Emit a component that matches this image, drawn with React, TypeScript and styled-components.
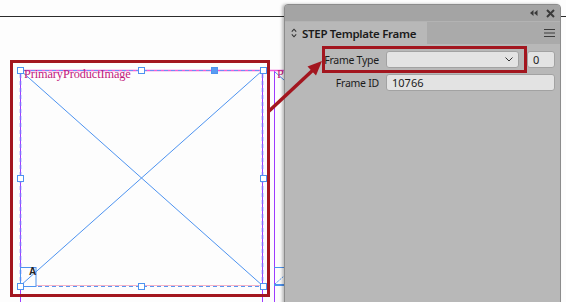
import React from 'react'
import styled, { createGlobalStyle } from 'styled-components'

const GlobalStyle = createGlobalStyle`
  html, body {
    margin: 0;
    padding: 0;
    background: #fdfdfd;
  }
  body {
    font-family: "Noto Sans", "Liberation Sans", sans-serif;
  }
  *, *::before, *::after {
    box-sizing: border-box;
  }
`

const Stage = styled.div`
  position: relative;
  width: 566px;
  height: 302px;
  overflow: hidden;
  background: #fdfdfd;
`

const TopRule = styled.div`
  position: absolute;
  left: 0;
  right: 0;
  top: 16px;
  height: 1px;
  background: #2b2b2b;
`

const Artwork = styled.svg`
  position: absolute;
  left: 0;
  top: 0;
`

const FrameLabel = styled.span<{ $x: number }>`
  position: absolute;
  top: 67px;
  left: ${p => p.$x}px;
  font-family: "Liberation Serif", "DejaVu Serif", serif;
  font-size: 12.3px;
  letter-spacing: -0.1px;
  color: #c2187c;
  white-space: nowrap;
`

const AnchorMark = styled.span`
  position: absolute;
  left: 29px;
  top: 266px;
  font-family: "Liberation Sans", Arial, sans-serif;
  font-size: 10px;
  font-weight: 700;
  color: #222;
`

const Handle = styled.div<{ $filled?: boolean }>`
  position: absolute;
  width: 7px;
  height: 7px;
  margin: -3.5px 0 0 -3.5px;
  border: 1px solid #4d93f0;
  background: ${p => (p.$filled ? '#5a9bf2' : '#fff')};
`

const Highlight = styled.div`
  position: absolute;
  border: 3px solid #a3161f;
  pointer-events: none;
`

const Panel = styled.section`
  position: absolute;
  left: 284px;
  top: 4px;
  width: 277px;
  height: 310px;
  display: flex;
  flex-direction: column;
  background: #b8b8b8;
  border: 1px solid #8c8c8c;
  border-radius: 4px 4px 0 0;
  box-shadow: -2px 0 3px rgba(0, 0, 0, 0.25);
  overflow: hidden;
  color: #1b1b1b;
`

const TitleBar = styled.div`
  height: 17px;
  display: flex;
  align-items: center;
  justify-content: flex-end;
  gap: 8px;
  padding-right: 5px;
  background: #a4a4a4;
  border-bottom: 1px solid #b3b3b3;
`

const TabStrip = styled.div`
  height: 22px;
  display: flex;
  align-items: stretch;
  background: #aaaaaa;
`

const Tab = styled.div`
  width: 142px;
  display: flex;
  align-items: center;
  gap: 5px;
  padding-left: 6px;
  background: #b8b8b8;
  font-size: 11.5px;
  font-weight: 600;
  letter-spacing: -0.3px;
  white-space: nowrap;
`

const MenuButton = styled.div`
  margin-left: auto;
  display: flex;
  align-items: center;
  padding-right: 5px;
`

const Body = styled.div`
  display: grid;
  grid-template-columns: 94px 1fr;
  column-gap: 7px;
  row-gap: 6px;
  padding: 7px 5px 0 0;
  align-items: center;
`

const Label = styled.label`
  text-align: right;
  font-size: 10.5px;
  letter-spacing: -0.25px;
  white-space: nowrap;
`

const FieldRow = styled.div`
  display: flex;
  gap: 8px;
`

const Field = styled.div<{ $width?: number }>`
  height: 17px;
  flex: ${p => (p.$width ? `0 0 ${p.$width}px` : '1 1 auto')};
  display: flex;
  align-items: center;
  justify-content: space-between;
  padding: 0 5px;
  background: #e3e3e3;
  border: 1px solid #a2a2a2;
  border-radius: 3px;
  font-size: 11px;
`

const Icon = styled.svg`
  display: block;
`

const Arrow = styled.svg`
  position: absolute;
  left: 0;
  top: 0;
  pointer-events: none;
`

const handles: [number, number, boolean?][] = [
  [20, 70], [141.5, 70], [214.5, 70, true], [263, 70],
  [20, 178], [263, 178],
  [20, 286], [141.5, 286], [263, 286],
]

const CanvasArt = () => (
  <Artwork width={566} height={302}>
    {/* guides */}
    <line x1={20.5} y1={70} x2={20.5} y2={302} stroke="#9d3cff" />
    <line x1={262.5} y1={70} x2={262.5} y2={302} stroke="#9d3cff" />
    <line x1={274.5} y1={70} x2={274.5} y2={302} stroke="#9d3cff" />
    <line x1={20} y1={70.5} x2={284} y2={70.5} stroke="#f25ad8" strokeWidth={1.5} />
    {/* frame edges */}
    <line x1={20.5} y1={74} x2={20.5} y2={284} stroke="#7f6bff" strokeWidth={1.5} strokeDasharray="4 3" />
    <line x1={262.5} y1={74} x2={262.5} y2={284} stroke="#7f6bff" strokeWidth={1.5} strokeDasharray="4 3" />
    <line x1={24} y1={70.5} x2={262} y2={70.5} stroke="#6d8ff5" strokeDasharray="4 3" />
    <line x1={36} y1={285.5} x2={262} y2={285.5} stroke="#f4b3c8" />
    <line x1={24} y1={286.5} x2={262} y2={286.5} stroke="#5a95f0" strokeDasharray="4 3" />
    {/* placeholder cross */}
    <line x1={20} y1={70} x2={263} y2={286} stroke="#4d93f0" />
    <line x1={263} y1={70} x2={20} y2={286} stroke="#4d93f0" />
    {/* anchor box */}
    <rect x={20.5} y={267.5} width={15.5} height={19} fill="none" stroke="#4d93f0" />
    {/* next frame */}
    <line x1={274} y1={267.5} x2={284} y2={267.5} stroke="#4d93f0" />
    <line x1={274} y1={285} x2={284} y2={285} stroke="#4d93f0" strokeWidth={2} />
    <line x1={275} y1={284} x2={284} y2={276} stroke="#4d93f0" strokeDasharray="2 1" />
    <line x1={275} y1={72} x2={284} y2={80} stroke="#4d93f0" />
  </Artwork>
)

const App = () => {
  return (
    <Stage>
      <GlobalStyle />
      <TopRule />
      <CanvasArt />
      <FrameLabel $x={24}>PrimaryProductImage</FrameLabel>
      <FrameLabel $x={277}>P</FrameLabel>
      <AnchorMark>A</AnchorMark>
      {handles.map(([x, y, filled], i) => (
        <Handle key={i} $filled={filled} style={{ left: x, top: y }} />
      ))}
      <Highlight style={{ left: 10, top: 60, width: 260, height: 237 }} />

      <Panel>
        <TitleBar>
          <Icon width={8} height={8} viewBox="0 0 8 8">
            <path d="M0 4 L3.5 1 V7 Z M4 4 L7.5 1 V7 Z" fill="#3a3a3a" />
          </Icon>
          <Icon width={9} height={9} viewBox="0 0 9 9">
            <path d="M1 1 L8 8 M8 1 L1 8" stroke="#3a3a3a" strokeWidth={2} />
          </Icon>
        </TitleBar>
        <TabStrip>
          <Tab>
            <Icon width={6} height={10} viewBox="0 0 6 10">
              <path d="M0.8 3.6 L3 1.2 L5.2 3.6 M0.8 6.4 L3 8.8 L5.2 6.4" fill="none" stroke="#333" strokeWidth={1.1} />
            </Icon>
            STEP Template Frame
          </Tab>
          <MenuButton>
            <Icon width={11} height={8} viewBox="0 0 11 8">
              <path d="M0 0.5 H11 M0 4 H11 M0 7.5 H11" stroke="#3c3c3c" strokeWidth={1.2} />
            </Icon>
          </MenuButton>
        </TabStrip>
        <Body>
          <Label>Frame Type</Label>
          <FieldRow>
            <Field $width={133}>
              <span />
              <Icon width={8} height={5} viewBox="0 0 8 5">
                <path d="M0.5 0.5 L4 4 L7.5 0.5" fill="none" stroke="#333" strokeWidth={1} />
              </Icon>
            </Field>
            <Field>0</Field>
          </FieldRow>
          <Label>Frame ID</Label>
          <Field>10766</Field>
        </Body>
      </Panel>

      <Highlight style={{ left: 322, top: 46, width: 205, height: 27 }} />
      <Arrow width={566} height={302}>
        <line x1={268} y1={112} x2={313} y2={70} stroke="#a3161f" strokeWidth={3.5} />
        <polygon points="322,61 316,75.5 307.5,66.5" fill="#a3161f" />
      </Arrow>
    </Stage>
  )
}

export default App
